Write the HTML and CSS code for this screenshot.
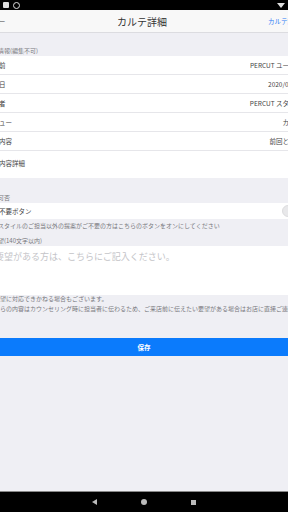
FILE: index.html
```html
<!DOCTYPE html>
<html>
  <head>
    <meta charset="UTF-8">
    <meta name="viewport" content="width=device-width, initial-scale=1">
    <title>カルテ詳細</title>
    <link rel="stylesheet" href="styles.css">
  </head>
  <body>
    <div class="status-bar">
      <span class="status-icon sim"></span>
      <span class="status-icon dnd"></span>
      <span class="status-wifi"></span>
    </div>

    <div class="screen">
      <div class="page">
        <div class="nav-header">
          <span class="nav-back">&larr;</span>
          <span class="nav-title">カルテ詳細</span>
          <span class="nav-link">カルテ詳細</span>
        </div>

        <div class="section-title tall first">基本情報(編集不可)</div>
        <div class="group">
          <div class="row"><span class="row-label">お名前</span><span class="row-value">PERCUT ユーザー</span></div>
          <div class="row"><span class="row-label">来店日</span><span class="row-value">2020/05/12</span></div>
          <div class="row"><span class="row-label">担当者</span><span class="row-value">PERCUT スタッフ</span></div>
          <div class="row"><span class="row-label">メニュー</span><span class="row-value">カット</span></div>
          <div class="row"><span class="row-label">施術内容</span><span class="row-value">前回と同じ</span></div>
          <div class="row row-detail"><span class="row-label">施術内容詳細</span></div>
        </div>

        <div class="section-title tall">提案可否</div>
        <div class="group">
          <div class="row row-toggle">
            <span class="row-label">提案不要ボタン</span>
            <span class="switch"></span>
          </div>
        </div>
        <div class="section-note">ヘアスタイルのご担当以外の提案がご不要の方はこちらのボタンをオンにしてください</div>

        <div class="section-title">ご要望(140文字以内)</div>
        <div class="group">
          <div class="textarea">ご要望がある方は、こちらにご記入ください。</div>
        </div>
        <div class="footnotes">
          <p>ご要望に対応できかねる場合もございます。</p>
          <p>こちらの内容はカウンセリング時に担当者に伝わるため、ご来店前に伝えたい要望がある場合はお店に直接ご連絡ください。</p>
        </div>

        <button class="save-button">保存</button>
      </div>
    </div>

    <div class="nav-bar">
      <span class="nav-btn back"></span>
      <span class="nav-btn home"></span>
      <span class="nav-btn recent"></span>
    </div>
  </body>
</html>
```

FILE: styles.css
```css
html, body {
  margin: 0;
  padding: 0;
  height: 100%;
}
body {
  width: 288px;
  height: 512px;
  overflow: hidden;
  display: flex;
  flex-direction: column;
  background: #efeff4;
  font-family: "Noto Sans CJK JP", "Noto Sans", sans-serif;
  color: #333;
}

.status-bar {
  height: 10px;
  flex: none;
  background: #000;
  display: flex;
  align-items: center;
  gap: 4px;
  padding: 0 3px;
}
.status-icon {
  width: 6px;
  height: 6px;
  background: #ddd;
  border-radius: 1px;
}
.status-icon.dnd {
  border-radius: 50%;
  background: none;
  border: 1px solid #ddd;
  width: 5px;
  height: 5px;
}
.status-wifi {
  margin-left: auto;
  width: 0;
  height: 0;
  border-left: 4px solid transparent;
  border-right: 4px solid transparent;
  border-top: 5px solid #ddd;
}

.screen {
  flex: 1;
  overflow: hidden;
}
.page {
  width: 316px;
  margin-left: -14px;
}

.nav-header {
  height: 22px;
  background: #f8f8f8;
  border-bottom: 1px solid #dcdce0;
  display: flex;
  align-items: center;
  justify-content: space-between;
  font-size: 10px;
}
.nav-back {
  width: 30px;
  text-align: center;
  font-size: 8px;
  color: #444;
}
.nav-title {
  color: #333;
}
.nav-link {
  font-size: 6.5px;
  color: #2f7cf6;
  width: 34px;
  white-space: nowrap;
  overflow: hidden;
}

.section-title {
  font-size: 6px;
  color: #77777c;
  line-height: 9px;
  padding: 0 0 1px;
}
.section-title.tall {
  height: 25px;
  display: flex;
  align-items: flex-end;
  padding: 0 0 1px;
  box-sizing: border-box;
}
.section-title.tall.first {
  height: 23px;
}
.section-note {
  font-size: 6px;
  color: #77777c;
  line-height: 9px;
  padding: 2px 0 0;
  height: 15px;
  white-space: nowrap;
}

.group {
  background: #fff;
}
.row {
  height: 18px;
  border-bottom: 1px solid #e6e6ea;
  display: flex;
  align-items: center;
  justify-content: space-between;
  font-size: 6.5px;
  white-space: nowrap;
  color: #444;
}
.row:last-child {
  border-bottom: none;
}
.row-detail {
  height: 27px;
  align-items: flex-start;
  padding-top: 7px;
  box-sizing: border-box;
}
.row-toggle {
  height: 16px;
}
.switch {
  width: 20px;
  height: 12px;
  border-radius: 6px;
  background: #e8e8ea;
  border: 1px solid #dcdcde;
  box-sizing: border-box;
}

.textarea {
  height: 49px;
  box-sizing: border-box;
  padding-top: 4px;
  font-size: 9px;
  color: #c4c4c8;
  white-space: nowrap;
}

.footnotes {
  font-size: 6px;
  color: #77777c;
  line-height: 10px;
  padding-left: 2px;
  margin-top: -1px;
  white-space: nowrap;
}
.footnotes p {
  margin: 0;
}

.save-button {
  display: block;
  width: 100%;
  height: 18px;
  margin-top: 24px;
  border: none;
  background: #0b7bfc;
  color: #fff;
  font-family: inherit;
  font-size: 6.5px;
  font-weight: bold;
  padding: 0;
}

.nav-bar {
  height: 20px;
  flex: none;
  background: #000;
  border-top: 1px solid #888;
  display: flex;
  align-items: center;
  justify-content: center;
  gap: 44px;
}
.nav-btn {
  display: block;
}
.nav-btn.back {
  width: 0;
  height: 0;
  border-top: 3px solid transparent;
  border-bottom: 3px solid transparent;
  border-right: 5px solid #bbb;
}
.nav-btn.home {
  width: 6px;
  height: 6px;
  border-radius: 50%;
  background: #bbb;
}
.nav-btn.recent {
  width: 5px;
  height: 5px;
  background: #bbb;
}
```
